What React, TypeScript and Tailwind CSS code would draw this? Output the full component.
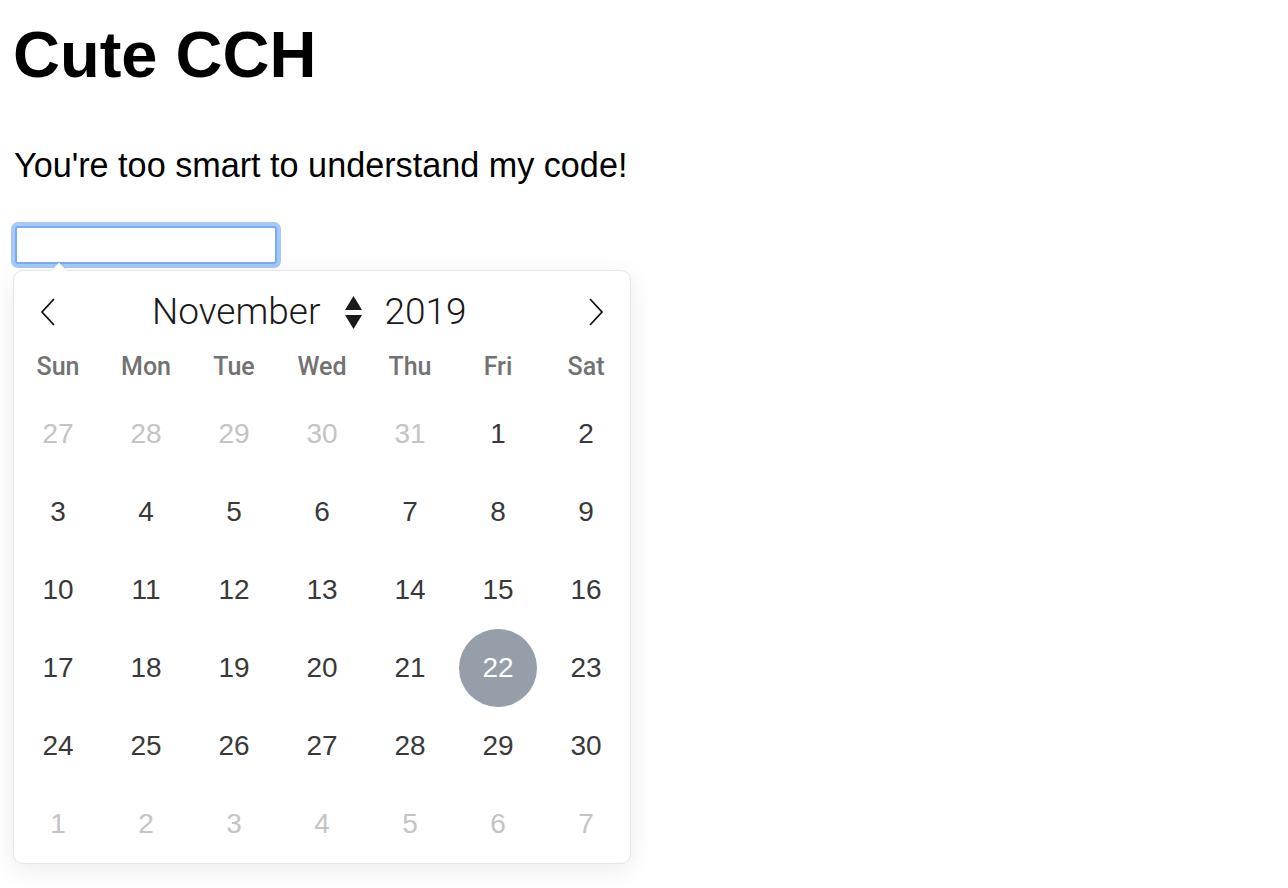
import React from 'react';

type Day = { n: number; muted?: boolean; selected?: boolean };

const weekdays = ['Sun', 'Mon', 'Tue', 'Wed', 'Thu', 'Fri', 'Sat'];

const buildDays = (): Day[] => {
  const days: Day[] = [];
  [27, 28, 29, 30, 31].forEach((n) => days.push({ n, muted: true }));
  for (let n = 1; n <= 30; n++) days.push({ n, selected: n === 22 });
  for (let n = 1; n <= 7; n++) days.push({ n, muted: true });
  return days;
};

const Chevron: React.FC<{ dir: 'left' | 'right' }> = ({ dir }) => (
  <svg width="16" height="28" viewBox="0 0 16 28" fill="none">
    <path
      d={dir === 'left' ? 'M14 1 L2 14 L14 27' : 'M2 1 L14 14 L2 27'}
      stroke="#111"
      strokeWidth="1.8"
    />
  </svg>
);

const Calendar: React.FC = () => {
  const days = buildDays();
  return (
    <div className="relative mt-[6px] w-[618px] rounded-[10px] border border-[#e6e6e6] bg-white shadow-[0_6px_26px_rgba(0,0,0,0.08)]">
      {/* little arrow pointing at the input */}
      <svg className="absolute -top-[9px] left-[35px]" width="20" height="10" viewBox="0 0 20 10">
        <polygon points="1,10 10,1 19,10" fill="white" stroke="#e6e6e6" strokeWidth="1" />
        <rect x="0" y="9" width="20" height="2" fill="white" />
      </svg>

      <div className="flex h-[68px] items-center pt-[14px]">
        <div className="flex w-[68px] justify-center">
          <Chevron dir="left" />
        </div>
        <div className="flex flex-1 items-center pl-[70px] font-['Roboto',sans-serif] text-[37px] font-light text-[#1a1a1a]">
          <span>November</span>
          <span className="ml-[25px] flex flex-col items-center gap-[5px]">
            <svg width="17" height="14" viewBox="0 0 17 14">
              <polygon points="0,14 8.5,0 17,14" fill="#1a1a1a" />
            </svg>
            <svg width="17" height="14" viewBox="0 0 17 14">
              <polygon points="0,0 17,0 8.5,14" fill="#1a1a1a" />
            </svg>
          </span>
          <span className="ml-[22px]">2019</span>
        </div>
        <div className="flex w-[68px] justify-center">
          <Chevron dir="right" />
        </div>
      </div>

      <div className="grid h-[56px] grid-cols-7 items-center text-center font-['Roboto',sans-serif] text-[25px] font-medium text-[#727272]">
        {weekdays.map((w) => (
          <span key={w}>{w}</span>
        ))}
      </div>

      <div className="grid grid-cols-7">
        {days.map((d, i) => (
          <div key={i} className="flex h-[78px] items-center justify-center">
            <span
              className={
                d.selected
                  ? 'flex h-[78px] w-[78px] items-center justify-center rounded-full bg-[#959ea9] text-white'
                  : d.muted
                  ? 'text-[#c4c4c4]'
                  : 'text-[#393939]'
              }
            >
              {d.n}
            </span>
          </div>
        ))}
      </div>
    </div>
  );
};

export default function App() {
  return (
    <div className="min-h-screen bg-white pl-[13px] font-['Liberation_Sans',Arial,sans-serif] text-[28px] text-black">
      <h1 className="pt-[22px] text-[65px] leading-[66px] font-bold">Cute CCH</h1>
      <p className="mt-[60px] pl-[1px] text-[34.2px] leading-[34px]">You're too smart to understand my code!</p>
      <input
        type="text"
        className="mt-[44px] ml-[2px] block h-[38px] w-[262px] rounded-[3px] border-2 border-[#78acf5] bg-white outline-none ring-[4px] ring-[#a6c9f8]"
      />
      <Calendar />
    </div>
  );
}
